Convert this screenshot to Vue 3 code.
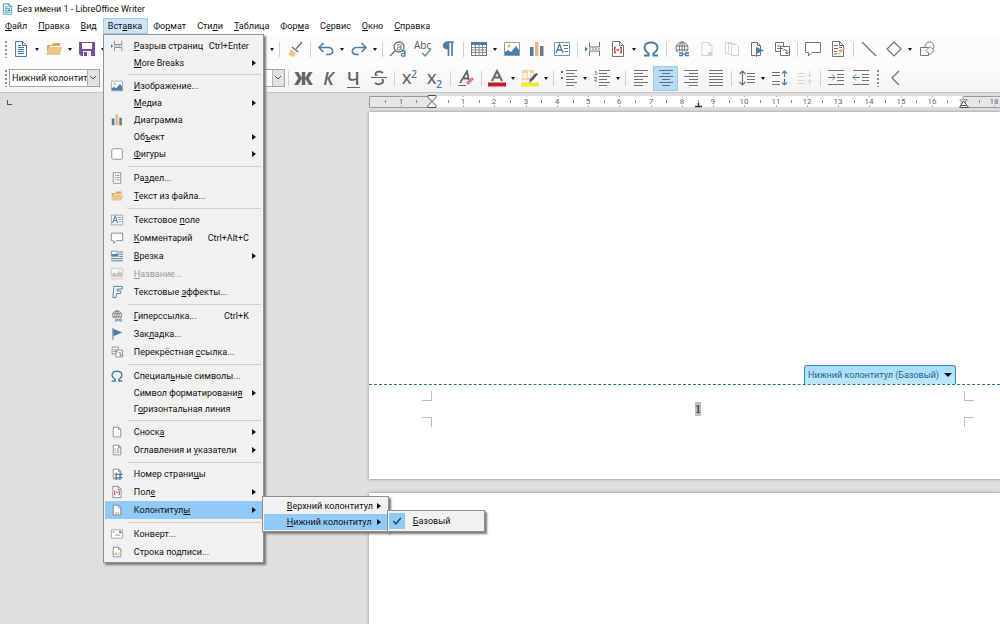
<script setup>
const G = '#737373'
const B = '#4a7ea8'
const T = '#e6bb78'

const page = `<path d="M3 1.5h7l3 3v10H3z" fill="#fff" stroke="${G}"/><path d="M10 1.5v3h3" fill="none" stroke="${G}"/>`

const icons = {
  app: `<path d="M2 .5h8l4 4v11H2z" fill="#e9f5fb" stroke="#1d7da8"/><path d="M10 .5v4h4" fill="none" stroke="#1d7da8"/><path d="M4 5h4M4 7.500h8M4 10h4M4 12.500h8" stroke="#1d7da8"/><path d="M9 9h3v2H9z" fill="#1d7da8"/>`,
  doc: `<path d="M2.500 .5h7l4 4v11h-11z" fill="#f1f8fc" stroke="${B}"/><path d="M9.500 .5v4h4" fill="none" stroke="${B}"/><path d="M5 4.500h3M5 6.500h6M5 8.500h6M5 10.500h6M5 12.500h6" stroke="${B}"/>`,
  folder: `<path d="M1 4h5l1-2h7v3H4L1 12z" fill="#dca85c"/><path d="M3 6h13l-2 8H0z" fill="#ecc68b"/>`,
  save: `<path d="M0 1h16v14H2l-2-2z" fill="#76509a"/><path d="M3 2h10v6H3z" fill="#fff"/><path d="M4 10h8v5H4z" fill="#f4eef9"/><path d="M5 11h3v4H5z" fill="#76509a"/>`,
  brush: `<path d="M15 1L9 8" stroke="${G}" stroke-width="1.500"/><path d="M5 6l6 5" stroke="${G}" stroke-width="1.500"/><path d="M4 8l5 4-2 4-6-2z" fill="#ecc68b"/>`,
  undo: `<path d="M5.500 2L1 6.500 5.500 11M1 6.500h9c6 0 6 7 1 7H8" fill="none" stroke="${B}" stroke-width="1.600"/>`,
  redo: `<path d="M10.500 2L15 6.500 10.500 11M15 6.500H6c-6 0-6 7-1 7h3" fill="none" stroke="${B}" stroke-width="1.600"/>`,
  find: `<circle cx="9" cy="6" r="5" fill="none" stroke="${G}" stroke-width="1.300"/><path d="M5.500 9.500L0 15" stroke="${G}" stroke-width="1.500"/><path d="M7 5c1-2 4-2 4 0v4M11 6c-5-.5-5 3-2 3l2-1" fill="none" stroke="${G}"/><path d="M11 10.500c2-1 4-.5 4 1V15c-5 1-5-3 0-2.500M15 9v6" fill="none" stroke="${B}" stroke-width="1.200"/>`,
  spell: `<text x="-1" y="8" font-size="10" font-family="Open Sans, sans-serif" fill="#555">Abc</text><path d="M7 12l3 3 6-7" fill="none" stroke="#5c8f94" stroke-width="1.500"/>`,
  pilcrow: `<path d="M7.500 1H14M8.500 1v14M12 1v14" stroke="${B}" stroke-width="1.700" fill="none"/><path d="M8 .5C1 .5 1 8.500 8 8.500z" fill="${B}"/>`,
  table: `<path d="M.5 1.500h15v13H.5z" fill="#fff" stroke="${G}"/><path d="M0 1h16v3H0z" fill="${B}"/><path d="M1 6.500h14M1 9h14M1 11.500h14M4.500 4v11M8 4v11M11.500 4v11" stroke="#8a8a8a"/>`,
  image: `<path d="M.5 1.500h15v13H.5z" fill="#fff" stroke="#8c9aa6"/><circle cx="5" cy="5" r="1.800" fill="${T}"/><path d="M1 14v-3l3-2 3 2 5-6 3 4v5z" fill="${B}"/>`,
  chart: `<path d="M1 6h3.500v9H1z" fill="${B}"/><path d="M6 1h3.500v14H6z" fill="${T}"/><path d="M11 5h3.500v10H11z" fill="#777"/>`,
  textbox: `<path d="M.5 1.500h15v13H.5z" fill="#fff" stroke="#7994a8"/><path d="M2 12l3.500-9L9 12M3.300 9h4.500" stroke="${B}" stroke-width="1.400" fill="none"/><path d="M9 4.500h5M10 7.500h4M10.500 10.500H14" stroke="${G}"/>`,
  pagebreak: `<path d="M4.500 1v5h10V1M4.500 15v-5h10v5" fill="none" stroke="${G}"/><path d="M4 8h12" stroke="${B}" stroke-dasharray="2 1"/><path d="M0 5.500L3 8l-3 2.500z" fill="${B}"/>`,
  field: `<path d="M2.500 .5h7l4 4v11h-11z" fill="#fff" stroke="${G}"/><path d="M9.500 .5v4h4" fill="none" stroke="${G}"/><path d="M6 6.500H4.800v5H6M10 6.500h1.200v5H10M6.500 9h3" fill="none" stroke="#c2463d" stroke-width="1.300"/>`,
  omega: `<path d="M1 14.500h4.500v-2C-1 8 1 1.500 8 1.500s9 6.500 2.500 11v2H15" fill="none" stroke="${B}" stroke-width="2"/>`,
  link: `<g fill="none" stroke="${G}"><circle cx="8" cy="7" r="6"/><ellipse cx="8" cy="7" rx="2.700" ry="6"/><path d="M2 5h12M2 9h12M8 1v12"/></g><path d="M4 10.500h12v5.500H4z" fill="#fbfbfb"/><path d="M5 12h4M11 12h4M5 14.500h4M11 14.500h4M8 13.200h4" stroke="${B}" stroke-width="1.300"/>`,
  footnote: `<g opacity=".3">${page}<path d="M9 11h4v3H9z" fill="${G}"/></g>`,
  endnote: `<g opacity=".3" fill="#fff" stroke="${G}"><path d="M1.500 1.500h6v11h-6z"/><path d="M4.500 2.500h6v11h-6z"/><path d="M7.500 3.500h5l2 2v9h-7z"/></g>`,
  bookmark: `<path d="M2.500 1.500h6l3 3v10h-9z" fill="#fff" stroke="${G}"/><path d="M8.500 1.500v3h3" fill="none" stroke="${G}"/><path d="M7 6l8 3.500L7 13z" fill="${B}"/><path d="M7.500 6v10" stroke="${B}"/>`,
  crossref: `<path d="M1.500 1.500h8v9h-8z" fill="#fff" stroke="${G}"/><path d="M6.500 5.500h9v9h-9z" fill="#fff" stroke="${G}"/><path d="M3 5h4M3 7.500h6M9 9h4v4M11 11l2 2 2-2" fill="none" stroke="${G}"/>`,
  comment: `<path d="M.5 1.500h15v10H7L3.500 15v-3.500h-3z" fill="#fff" stroke="${G}"/>`,
  track: `<path d="M2.500 .5h7l4 4v11h-11z" fill="#fff" stroke="${G}"/><path d="M9.500 .5v4h4" fill="none" stroke="${G}"/><path d="M4 4.500h4M4 7.500h4M4 10.500h3" stroke="#c2463d"/><path d="M9 6.500h3M9 9.500h2M4 13h3" stroke="${G}"/><path d="M16 7l-6 6-2 2 1-3 5-6z" fill="${T}"/>`,
  line: `<path d="M1 1l14 14" stroke="${G}" stroke-width="1.200"/>`,
  diamond: `<path d="M8 1l7 7-7 7-7-7z" fill="#fff" stroke="${G}" stroke-width="1.200"/>`,
  shapes: `<circle cx="10.500" cy="5.500" r="4.500" fill="#fff" stroke="${G}"/><path d="M1.500 6.500h8v8h-8z" fill="#fff" stroke="${G}"/><path d="M11 5.500l4 4-4 4-4-4z" fill="#fff" stroke="${G}"/>`,
  strike: `<path d="M12 3C8 0 3 2 5 5.500c1 2 6 1.500 7 4.500s-4 6-8 3" fill="none" stroke="#666" stroke-width="1.800"/><path d="M0 7.500h16" stroke="#fff" stroke-width="3"/><path d="M0 7.500h16" stroke="#666" stroke-width="1.200"/>`,
  clear: `<path d="M2 13L9 1.500l2 9M5 8.500h6" fill="none" stroke="#666" stroke-width="1.800"/><path d="M0 15.500h8" stroke="#666"/><path d="M15 8l-6 6" stroke="#df7f92" stroke-width="3"/>`,
  color: `<path d="M3 11L8 1l5 10M5 7.500h6" fill="none" stroke="#666" stroke-width="2"/><path d="M-1 12.500h18v4H-1z" fill="#bf1e2e"/>`,
  highlight: `<path d="M0 0h12v10H0z" fill="#efd3a0"/><text x="0" y="8" font-size="9" font-weight="700" font-family="Open Sans, sans-serif" fill="#fff">ab</text><path d="M-1 12.500h18v4H-1z" fill="#f7ea2c"/><path d="M16 4l-5 6-4 3 1-4 6-6z" fill="#555"/>`,
  bullets: `<g stroke="${G}">${[0.5, 3.5, 6.5, 9.5, 12.5, 15.5].map((y, i) => `<path d="M5 ${y}h${i % 2 ? 8 : 11}"/>`).join('')}</g><path d="M0 1h2v2H0zM0 7h2v2H0z" fill="${B}"/>`,
  numbers: `<g stroke="${G}">${[0.5, 3.5, 6.5, 9.5, 12.5, 15.5].map((y, i) => `<path d="M5 ${y}h${i % 2 ? 8 : 11}"/>`).join('')}</g><path d="M1 1.500h1v4M0 7.500h2.500v1.500L.5 11H3" fill="none" stroke="${B}"/>`,
  left: `<g stroke="${G}">${[0.5, 3.5, 6.5, 9.5, 12.5, 15.5].map((y, i) => `<path d="M1 ${y}h${i % 2 ? 9 : 14}"/>`).join('')}</g>`,
  center: `<g stroke="#55748c">${[0.5, 3.5, 6.5, 9.5, 12.5, 15.5].map((y, i) => `<path d="M${i % 2 ? 4 : 1} ${y}h${i % 2 ? 8 : 14}"/>`).join('')}</g>`,
  right: `<g stroke="${G}">${[0.5, 3.5, 6.5, 9.5, 12.5, 15.5].map((y, i) => `<path d="M${i % 2 ? 6 : 1} ${y}h${i % 2 ? 9 : 14}"/>`).join('')}</g>`,
  justify: `<g stroke="${G}">${[0.5, 3.5, 6.5, 9.5, 12.5, 15.5].map((y) => `<path d="M1 ${y}h14"/>`).join('')}</g>`,
  spacing: `<path d="M3.500 1v14M.5 4l3-3 3 3M.5 12l3 3 3-3M8 3.500h8M8 6.500h8M8 9.500h8M8 12.500h8" fill="none" stroke="${G}" stroke-width="1.200"/>`,
  spaceup: `<path d="M0 2.500h8M0 5.500h8M0 11.500h8M0 14.500h8" stroke="${G}"/><path d="M12.500 7V1M10 3.500L12.500 1 15 3.500M12.500 9v6M10 12.500l2.500 2.500 2.500-2.500" fill="none" stroke="${B}" stroke-width="1.200"/>`,
  spacedown: `<g opacity=".25" fill="none" stroke="${G}"><path d="M1 3.500h7M1 6.500h7M1 10.500h7M1 13.500h7M12.500 1v5M10 4l2.500 2.500L15 4M12.500 15v-5M10 12l2.500-2.500L15 12"/></g>`,
  indent: `<path d="M0 .5h16M9 4.500h7M9 7.500h7M9 10.500h7M0 14.500h16" stroke="${G}"/><path d="M0 7.500h7M4 4.500l3 3-3 3" fill="none" stroke="${B}"/>`,
  outdent: `<path d="M0 .5h16M9 4.500h7M9 7.500h7M9 10.500h7M0 14.500h16" stroke="${G}"/><path d="M0 7.500h7M3 4.500l-3 3 3 3" fill="none" stroke="${B}"/>`,
  back: `<path d="M11 1L4 8l7 7" fill="none" stroke="${G}" stroke-width="1.300"/>`,
  rounded: `<rect x="1" y="1" width="14" height="14" rx="2" fill="#fff" stroke="${G}"/>`,
  section: `<path d="M3 1h10v14H3z" fill="#fff" stroke="${G}"/><path d="M5 4.500h2M8 4.500h3M5 7.500h2M8 7.500h3M5 10.500h2M8 10.500h3" stroke="${G}" stroke-width="1.200"/>`,
  frame: `<path d="M.5 1.500h9v7h-9z" fill="#fff" stroke="${B}"/><path d="M1 8V6l2-1 2 1 2-2 2 2v2z" fill="${B}"/><path d="M11 2.500h5M11 5.500h5M11 8.500h5M0 11.500h16M0 14.500h16" stroke="#56788f" stroke-width="1.200"/>`,
  caption: `<g opacity=".35"><path d="M.5 .5h15v11H.5z" fill="#fff" stroke="${G}"/><path d="M1 11V8l3-2 3 2 4-4 4 4v3z" fill="${G}"/><path d="M0 14.500h16" stroke="${G}"/></g>`,
  fontwork: `<path d="M4 .5h11v3.500H8v2.500h5V10H7.500l-1 5.500H2.500z" fill="#f3f9fd" stroke="${B}" stroke-width="1.200"/>`,
  flag: `<path d="M2.500 0v16" stroke="${G}" stroke-width="1.200"/><path d="M3 1l12 5-12 5z" fill="${B}"/>`,
  note: page,
  toc: page + `<path d="M5 6.500h2M8 6.500h3M5 9h2M8 9h3M5 11.500h2M8 11.500h3" stroke="${G}"/>`,
  pageno: page + `<path d="M7 6v10M12 6v10M4.500 8.500h11M4.500 13h11" stroke="${B}" stroke-width="1.600"/>`,
  headfoot: page + `<path d="M5 11h6v2H5z" fill="${T}"/>`,
  envelope: `<path d="M.5 2.500h15v11H.5z" fill="#fff" stroke="#8496a3"/><path d="M11 4h3v3h-3z" fill="${B}"/><path d="M6 9.500h6M2 5h3" stroke="${G}"/>`,
  sign: page + `<path d="M5 12c1-3 2-3 2 0" fill="none" stroke="${G}"/><path d="M14 6l-5 6-1 2 2-1 5-6z" fill="${T}"/>`,
  check: `<path d="M3 8l3.500 4L13 4" fill="none" stroke="#16405f" stroke-width="1.800"/>`,
}

const menuBar = [
  ['', 'Ф', 'айл'], ['', 'П', 'равка'], ['', 'В', 'ид'], ['Вст', 'а', 'вка'], ['Фо', 'р', 'мат'], ['Сти', 'л', 'и'],
  ['', 'Т', 'аблица'], ['Фор', 'м', 'а'], ['С', 'е', 'рвис'], ['', 'О', 'кно'], ['', 'С', 'правка'],
]

const insertMenu = [
  { t: ['', 'Р', 'азрыв страниц'], icon: 'pagebreak', key: 'Ctrl+Enter' },
  { t: ['', 'M', 'ore Breaks'], sub: true },
  null,
  { t: ['', 'И', 'зображение...'], icon: 'image' },
  { t: ['', 'М', 'едиа'], sub: true },
  { t: ['', 'Д', 'иаграмма'], icon: 'chart' },
  { t: ['Об', 'ъ', 'ект'], sub: true },
  { t: ['', 'Ф', 'игуры'], icon: 'rounded', sub: true },
  null,
  { t: ['Ра', 'з', 'дел...'], icon: 'section' },
  { t: ['', 'Т', 'екст из файла...'], icon: 'folder' },
  null,
  { t: ['Текстовое ', 'п', 'оле'], icon: 'textbox' },
  { t: ['', 'К', 'омментарий'], icon: 'comment', key: 'Ctrl+Alt+C' },
  { t: ['', 'В', 'резка'], icon: 'frame', sub: true },
  { t: ['', 'Н', 'азвание...'], icon: 'caption', disabled: true },
  { t: ['Текстовые ', 'э', 'ффекты...'], icon: 'fontwork' },
  null,
  { t: ['', 'Г', 'иперссылка...'], icon: 'link', key: 'Ctrl+K' },
  { t: ['Зак', 'л', 'адка...'], icon: 'flag' },
  { t: ['Перекрёстная ', 'с', 'сылка...'], icon: 'crossref' },
  null,
  { t: ['Специал', 'ь', 'ные символы...'], icon: 'omega' },
  { t: ['Символ форматировани', 'я', ''], sub: true },
  { t: ['Г', 'о', 'ризонтальная линия'] },
  null,
  { t: ['Сноск', 'а', ''], icon: 'note', sub: true },
  { t: ['Оглавления и ', 'у', 'казатели'], icon: 'toc', sub: true },
  null,
  { t: ['Номер страни', 'ц', 'ы'], icon: 'pageno' },
  { t: ['Пол', 'е', ''], icon: 'field', sub: true },
  { t: ['Колонтитул', 'ы', ''], icon: 'headfoot', sub: true, open: true },
  null,
  { t: ['Конверт...', '', ''], icon: 'envelope' },
  { t: ['Строка подписи...', '', ''], icon: 'sign' },
]

const standardBar = [
  'doc', '>', 'folder', '>', 'save', '>', 'gap', '>', '|', 'brush', '|', 'undo', '>', 'redo', '>', '|',
  'find', 'spell', 'pilcrow', '|', 'table', '>', 'image', 'chart', 'textbox', '|', 'pagebreak', 'field', '>', 'omega', '|',
  'link', 'footnote', 'endnote', 'bookmark', 'crossref', '|', 'comment', 'track', '|', 'line', 'diamond', '>', 'shapes',
]

const formatBar = [
  '|', 'bold', 'italic', 'underline', 'strike', '|', 'sup', 'sub', '|', 'clear', '|', 'color', '>', 'highlight', '>', '|',
  'bullets', '>', 'numbers', '>', '|', 'left', 'center', 'right', 'justify', '|', 'spacing', '>', 'spaceup', 'spacedown', '|',
  'indent', 'outdent', 'grip', 'back',
]
const letters = { bold: 'Ж', italic: 'К', underline: 'Ч' }

const origin = 63
const unit = 531 / 17
const ticks = []
for (let i = -3; i <= 37; i++) {
  if (i === 0) continue
  ticks.push({ x: Math.round(origin + (i * unit) / 2), n: i % 2 ? null : Math.abs(i / 2) })
}
</script>

<template>
  <div class="window">
    <header class="titlebar">
      <svg class="ico app" viewBox="0 0 16 16" v-html="icons.app" />
      <span>Без имени 1 - LibreOffice Writer</span>
    </header>

    <nav class="menubar">
      <div v-for="(m, i) in menuBar" :key="i" class="menu-slot">
        <button class="menu-btn" :class="{ active: i === 3 }">{{ m[0] }}<u>{{ m[1] }}</u>{{ m[2] }}</button>
        <ul v-if="i === 3" class="menu main">
          <template v-for="(it, k) in insertMenu" :key="k">
            <li v-if="!it" class="divider" />
            <li v-else class="row" :class="{ tall: it.icon, hot: it.open }">
              <button class="item" :disabled="it.disabled">
                <span class="slot"><svg v-if="it.icon" class="ico small" viewBox="0 0 16 16" v-html="icons[it.icon]" /></span>
                <span class="label">{{ it.t[0] }}<u>{{ it.t[1] }}</u>{{ it.t[2] }}</span>
                <span v-if="it.key" class="key">{{ it.key }}</span>
                <i v-if="it.sub" class="more" />
              </button>
              <ul v-if="it.open" class="menu second">
                <li class="row">
                  <button class="item"><span class="slot" /><span class="label"><u>В</u>ерхний колонтитул</span><i class="more" /></button>
                </li>
                <li class="row hot">
                  <button class="item"><span class="slot" /><span class="label"><u>Н</u>ижний колонтитул</span><i class="more" /></button>
                  <ul class="menu third">
                    <li class="row">
                      <button class="item">
                        <span class="tick"><svg class="ico small" viewBox="0 0 16 16" v-html="icons.check" /></span>
                        <span class="label"><u>Б</u>азовый</span>
                      </button>
                    </li>
                  </ul>
                </li>
              </ul>
            </li>
          </template>
        </ul>
      </div>
    </nav>

    <div class="toolbar">
      <i class="grip" />
      <template v-for="(n, i) in standardBar" :key="i">
        <button v-if="n === '>'" class="drop" aria-label="▾"><i class="caret" /></button>
        <i v-else-if="n === '|'" class="vsep" />
        <i v-else-if="n === 'gap'" class="gap" />
        <button v-else class="tool" :aria-label="n"><svg class="ico" viewBox="0 0 16 16" v-html="icons[n]" /></button>
      </template>
    </div>

    <div class="toolbar format">
      <i class="grip" />
      <select class="combo style" aria-label="Стиль абзаца"><option>Нижний колонтитул</option></select>
      <select class="combo size" aria-label="Кегль" />
      <template v-for="(n, i) in formatBar" :key="i">
        <button v-if="n === '>'" class="drop" aria-label="▾"><i class="caret" /></button>
        <i v-else-if="n === '|'" class="vsep" />
        <i v-else-if="n === 'grip'" class="grip" />
        <button v-else-if="letters[n]" class="tool letter" :class="n">{{ letters[n] }}</button>
        <button v-else-if="n === 'sup'" class="tool script">X<sup>2</sup></button>
        <button v-else-if="n === 'sub'" class="tool script">X<sub>2</sub></button>
        <button v-else class="tool" :class="{ on: n === 'center' }" :aria-label="n"><svg class="ico" viewBox="0 0 16 16" v-html="icons[n]" /></button>
      </template>
    </div>

    <main class="work">
      <div class="rulerbar">
        <i class="tabstop" />
        <svg class="ruler" height="16">
          <rect x="0" y="3" width="100%" height="11" fill="#e6e6e6" />
          <rect :x="origin" y="3" width="531" height="11" fill="#fff" />
          <path :d="`M${origin} 3.5H0.5V14.5H${origin}M${origin + 531} 14.5V3.5H1200V14.5z`" fill="none" stroke="#9a9a9a" />
          <g v-for="t in ticks" :key="t.x">
            <text v-if="t.n" class="num" :x="t.x" y="11">{{ t.n }}</text>
            <path v-else :d="`M${t.x + 0.5} 7v3`" stroke="#8a8a8a" />
            <path v-if="t.n" :d="`M${t.x + 0.5} 12v2M${t.x + 0.5} 3v1`" stroke="#b5b5b5" />
          </g>
          <path d="M59 2.500h8v2L63 8.500 59 4.500zM59 14.500h8v-2L63 8.500l-4 4z" fill="#f4f4f4" stroke="#555" />
          <path d="M594.500 8l5 6.500h-9z M591 12.500h7" fill="#f4f4f4" stroke="#555" />
          <path d="M326 13.500h7M329.500 10v4" stroke="#333" stroke-width="1.500" />
        </svg>
      </div>

      <section class="sheet first">
        <div class="footer-edge">
          <button class="footer-tag">Нижний колонтитул (Базовый)<i class="caret" /></button>
        </div>
        <div class="footer-body">
          <div class="corners left"><i /><i /></div>
          <p><span class="pageno">1</span></p>
          <div class="corners right"><i /><i /></div>
        </div>
      </section>
      <section class="sheet next" />
    </main>
  </div>
</template>

<style>
body { overflow: hidden; }
</style>

<style scoped>
.window {
  height: 100vh;
  display: flex;
  flex-direction: column;
  font: 9px/12px Roboto, "Noto Sans", sans-serif;
  color: #111;
  background: #fff;
  overflow: hidden;
}
button { font: inherit; color: inherit; background: none; border: 0; padding: 0; margin: 0; }
ul { list-style: none; margin: 0; padding: 0; }
u { text-underline-offset: 1px; }
.ico { width: 16px; height: 16px; display: block; overflow: visible; }
.small { width: 12px; height: 12px; }

.titlebar { height: 18px; display: flex; align-items: center; gap: 4px; padding-left: 2px; box-sizing: border-box; flex: none; }
.app { width: 11px; height: 12px; }

.menubar { height: 16px; display: flex; flex: none; }
.menu-slot { position: relative; display: flex; }
.menu-btn { padding: 0 5px 0 4px; border: 1px solid transparent; white-space: nowrap; }
.menu-btn.active { background: #cce4f7; border-color: #a6cdec; }

.menu { position: absolute; box-sizing: border-box; background: #f1f1f1; border: 1px solid #8f8f8f; box-shadow: 2px 2px 2px #777; padding: 1px; z-index: 5; }
.main { top: 16px; left: 0; width: 161px; padding: 2px 1px 1px; }
.second { top: -5px; left: 157px; width: 127px; }
.third { top: -4px; left: 123px; width: 98px; padding: 2px 1px; z-index: 6; }
.row { position: relative; height: 16px; }
.row.tall { height: 18px; }
.hot { background: #91c9f7; }
.item { width: 100%; height: 100%; display: flex; align-items: center; text-align: left; white-space: nowrap; padding-right: 6px; }
.item:disabled { color: #9a9a9a; }
.slot { width: 29px; padding-left: 6px; box-sizing: border-box; flex: none; }
.second .slot { width: 23px; }
.tick { width: 16px; height: 16px; display: flex; align-items: center; justify-content: center; background: #91c9f7; margin-right: 8px; }
.label { flex: 1; }
.key { padding-right: 7px; }
.more { border: 3px solid transparent; border-left: 4px solid #111; border-right: 0; }
.divider { height: 6px; display: flex; align-items: center; }
.divider::before { content: ""; flex: 1; height: 1px; margin: 0 1px 0 23px; background: #d2d2d2; }

.toolbar { height: 30px; display: flex; align-items: center; flex: none; padding-left: 4px; background: #fcfcfc; }
.format { background: linear-gradient(#fcfcfc, #f3f3f3); border-bottom: 1px solid #c9c9c9; height: 28px; }
.grip { width: 4px; height: 17px; flex: none; background: repeating-linear-gradient(#8f8f8f 0 2px, transparent 2px 4px) 1px 0 / 2px 100% no-repeat; }
.tool { width: 25px; height: 25px; flex: none; display: flex; align-items: center; justify-content: center; }
.tool.on { background: #b9dcf4; box-shadow: inset 0 0 0 1px #9fcbea; }
.drop { width: 8px; height: 20px; flex: none; display: flex; align-items: center; justify-content: center; }
.caret { border: 3px solid transparent; border-top: 3px solid #111; border-bottom: 0; }
.toolbar .caret { border-width: 3px 2px 0; }
.vsep { width: 6px; height: 15px; flex: none; background: linear-gradient(#cfcfcf, #cfcfcf) center / 1px 100% no-repeat; }
.gap { width: 161px; flex: none; }
.combo {
  appearance: none; height: 18px; flex: none; box-sizing: border-box; border: 1px solid #a5a5a5; border-radius: 0; padding: 0 12px 0 2px;
  font: inherit; color: #111; text-overflow: clip;
  background:
    url("data:image/svg+xml,%3Csvg xmlns='http://www.w3.org/2000/svg' width='12' height='8'%3E%3Cpath d='M3 2l3 3 3-3' fill='none' stroke='%23555'/%3E%3C/svg%3E") right center no-repeat,
    linear-gradient(90deg, #b5b5b5 1px, #e2e2e2 1px) right / 12px 100% no-repeat,
    #fff;
}
.style { width: 91px; margin-left: 1px; }
.size { width: 179px; margin-left: 6px; }
.tool + .grip { margin: 0 3px; }
.letter { font: 600 18px/20px "Open Sans", "Noto Sans", sans-serif; color: #666; }
.bold { font-weight: 800; }
.italic { font-style: italic; }
.underline { text-decoration: underline; text-decoration-thickness: 1px; text-underline-offset: 2px; }
.script { font: 600 15px/16px "Open Sans", "Noto Sans", sans-serif; color: #666; }
.script sup, .script sub { font-size: 10px; line-height: 10px; color: #4a7ea8; }
.script sup { align-self: flex-start; padding-top: 3px; }
.script sub { align-self: flex-end; padding-bottom: 2px; }

.work { flex: 1; min-height: 0; display: flex; flex-direction: column; background: #dfdfdf; }
.rulerbar { height: 19px; display: flex; flex: none; }
.tabstop { width: 4px; height: 4px; margin: 7px 0 0 7px; border: solid #555; border-width: 0 0 1px 1px; }
.ruler { flex: 1; min-width: 0; margin-left: 357px; overflow: hidden; display: block; }
.num { font-size: 8px; text-anchor: middle; fill: #666; }

.sheet { margin-left: 369px; background: #fff; box-sizing: border-box; box-shadow: 0 0 3px #888; overflow: hidden; }
.first { height: 367px; flex: none; display: flex; flex-direction: column; justify-content: flex-end; }
.next { flex: 1; margin-top: 14px; }
.footer-edge { display: flex; justify-content: flex-end; padding-right: 44px; border-bottom: 1px dashed #2b6c88; }
.footer-tag {
  height: 19px; display: flex; align-items: center; gap: 5px; padding: 0 3px; color: #20658a;
  background: linear-gradient(#a9dcf8, #bfe7fb); border: 1px solid #3b8ab3; border-bottom: 0; border-radius: 3px 3px 0 0; white-space: nowrap;
}
.footer-tag .caret { border-width: 4px 4px 0; }
.footer-body { height: 94px; box-sizing: border-box; padding: 6px 0 52px 53px; display: flex; width: 605px; }
.corners { display: flex; flex-direction: column; justify-content: space-between; }
.corners i { width: 10px; height: 10px; border: 0 solid #bdbdbd; box-sizing: border-box; }
.corners.left i { border-right-width: 1px; }
.corners.right i { border-left-width: 1px; }
.corners i:first-child { border-bottom-width: 1px; }
.corners i:last-child { border-top-width: 1px; }
.footer-body p { flex: 1; margin: 0; display: flex; align-items: center; justify-content: center; }
.pageno { background: #bcbcbc; font: 12px/14px "Liberation Serif", serif; }
</style>
